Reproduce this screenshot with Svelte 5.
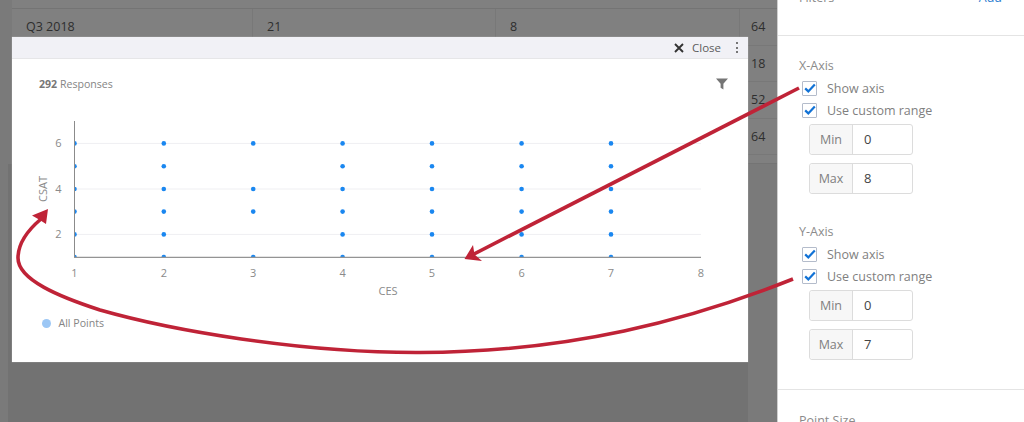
<script>
	const xTicks = [74.5, 163.8, 253.2, 342.6, 432, 521.6, 611, 701];
	const yPos = { 1: 257, 2: 234.4, 3: 211.6, 4: 189, 5: 166.2, 6: 143.4 };

	// which y values have points, per x value
	const series = [
		[1, 2, 3, 4, 5, 6],
		[1, 2, 3, 4, 5, 6],
		[1, 3, 4, 6],
		[1, 2, 3, 4, 5, 6],
		[1, 2, 3, 4, 5, 6],
		[1, 2, 3, 4, 5, 6],
		[1, 2, 3, 4, 5, 6]
	];

	const points = series.flatMap((ys, i) => ys.map((y) => ({ cx: xTicks[i], cy: yPos[y] })));

	const rows = [
		{ label: 'Q3 2018', a: '21', b: '8', c: '64' },
		{ label: '', a: '', b: '', c: '18' },
		{ label: '', a: '', b: '', c: '52' },
		{ label: '', a: '', b: '', c: '64' }
	];

	const axes = [
		{ title: 'X-Axis', min: 0, max: 8 },
		{ title: 'Y-Axis', min: 0, max: 7 }
	];
</script>

<div class="page">
	<main class="main">
		<div class="table">
			<div class="head-row"></div>
			{#each rows as row}
				<div class="row">
					<div class="cell">{row.label}</div>
					<div class="cell">{row.a}</div>
					<div class="cell">{row.b}</div>
					<div class="cell last">{row.c}</div>
				</div>
			{/each}
			<div class="tail-row"></div>
		</div>
		<div class="under"></div>
	</main>

	<aside class="sidebar">
		<section class="filters">
			<span>Filters</span>
			<span class="add">Add</span>
		</section>

		<section class="axes">
			{#each axes as axis}
				<div class="axis">
					<div class="title">{axis.title}</div>
					<label class="check">
						<span class="box">
							<svg width="12" height="10" viewBox="0 0 12 10"><path d="M1.2 5.4 4.3 8.4 10.8 1.4" fill="none" stroke="#1172d6" stroke-width="2.2" /></svg>
						</span>
						Show axis
					</label>
					<label class="check">
						<span class="box">
							<svg width="12" height="10" viewBox="0 0 12 10"><path d="M1.2 5.4 4.3 8.4 10.8 1.4" fill="none" stroke="#1172d6" stroke-width="2.2" /></svg>
						</span>
						Use custom range
					</label>
					<div class="field first"><span class="addon">Min</span><span class="value">{axis.min}</span></div>
					<div class="field"><span class="addon">Max</span><span class="value">{axis.max}</span></div>
				</div>
			{/each}
		</section>

		<section class="point-size">Point Size</section>
	</aside>

	<div class="modal">
		<header class="modal-head">
			<svg class="x-icon" width="10" height="10" viewBox="0 0 10 10"><path d="M1 1 9 9M9 1 1 9" stroke="#333" stroke-width="1.9" /></svg>
			<span class="close">Close</span>
			<span class="dots"><i></i><i></i><i></i></span>
		</header>
		<div class="summary">
			<span><b>292</b> Responses</span>
			<svg width="12" height="12" viewBox="0 0 12 12"><path d="M0 .5H12L7.4 5.8V11.6L4.6 9.8V5.8Z" fill="#757575" /></svg>
		</div>

		<svg class="chart" width="736" height="185" viewBox="12 115 736 185">
			<defs>
				<clipPath id="plot"><rect x="74.5" y="121" width="627" height="136" /></clipPath>
			</defs>
			{#each [2, 4, 6] as v}
				<line x1="74" x2="701" y1={yPos[v]} y2={yPos[v]} stroke="#efeff2" stroke-width="1" />
				<text class="tick" x="58.5" y={yPos[v] + 4} text-anchor="middle">{v}</text>
			{/each}
			<g clip-path="url(#plot)">
				{#each points as p}
					<circle cx={p.cx} cy={p.cy} r="2.3" fill="#1a87f0" />
				{/each}
			</g>
			<line x1="74.5" x2="74.5" y1="121" y2="257.5" stroke="#8b8b8b" stroke-width="1" />
			<line x1="74" x2="701" y1="257.3" y2="257.3" stroke="#949494" stroke-width="1.2" />
			{#each xTicks as x, i}
				<text class="tick" {x} y="277" text-anchor="middle">{i + 1}</text>
			{/each}
			<text class="tick" x="388" y="295" text-anchor="middle">CES</text>
			<text class="tick" transform="translate(47 189) rotate(-90)" text-anchor="middle">CSAT</text>
		</svg>

		<div class="legend"><span class="swatch"></span>All Points</div>
	</div>

	<svg class="arrows" width="1024" height="422" viewBox="0 0 1024 422">
		<g fill="none" stroke="#bf2337" stroke-width="3.6">
			<path d="M799 88 472 255" />
			<path d="M793 279C690 320 570 352 420 352.5 300 353 170 330 100 310 60 297 18 280 18 258 18 243 28 230 41 219" />
		</g>
		<g fill="#bf2337">
			<path d="M464.5 259 473 245 474.5 254.5 482 261Z" />
			<path d="M48 209 32 215.5 39 219.5 46 224Z" />
		</g>
	</svg>
</div>

<style>
	:global(body) {
		margin: 0;
	}

	.page {
		position: relative;
		display: grid;
		grid-template-columns: 777px 247px;
		width: 1024px;
		height: 422px;
		overflow: hidden;
		font-family: 'Open Sans', sans-serif;
	}

	.main {
		display: flex;
		flex-direction: column;
		background: #7a7a7a;
	}

	.table {
		margin-left: 12px;
		background: #808080;
		color: #2e2e2e;
		font-size: 12.5px;
	}

	.head-row {
		height: 8px;
		border-bottom: 1px solid #747474;
	}

	.row {
		display: grid;
		grid-template-columns: 241px 243px 244px 37px;
		height: 36.5px;
		box-sizing: border-box;
		border-bottom: 1px solid #787878;
	}

	.cell {
		padding-left: 14px;
		line-height: 36px;
		border-right: 1px solid #787878;
	}

	.cell.last {
		padding-left: 11px;
		border-right: 0;
	}

	.tail-row {
		height: 8px;
		border-bottom: 1px solid #747474;
	}

	.under {
		flex: 1;
		margin: 0 29px 0 8px;
		background: #727272;
	}

	.sidebar {
		background: #fff;
		border-left: 1px solid #cfcfcf;
		color: #8b8b8b;
		font-size: 12.5px;
	}

	.filters {
		display: flex;
		justify-content: space-between;
		height: 35px;
		padding: 0 22px 0 21px;
		line-height: 18px;
		border-bottom: 1px solid #e4e4e4;
		overflow: hidden;
	}

	.filters span {
		margin-top: -11px;
	}

	.add {
		color: #2f7fd1;
	}

	.axes {
		padding: 19px 0 29px 21px;
		border-bottom: 1px solid #e4e4e4;
	}

	.axis + .axis {
		margin-top: 27px;
	}

	.title {
		line-height: 22px;
	}

	.check {
		display: flex;
		align-items: center;
		gap: 10px;
		height: 22px;
		margin-left: 3px;
		color: #7f7f7f;
	}

	.box {
		display: flex;
		align-items: center;
		justify-content: center;
		box-sizing: border-box;
		width: 15px;
		height: 15px;
		border: 1.5px solid #b4bccb;
		border-radius: 1px;
	}

	.field {
		display: flex;
		box-sizing: border-box;
		width: 104px;
		height: 31px;
		margin: 8px 0 0 10px;
		border: 1px solid #dcdcdc;
		border-radius: 3px;
		line-height: 29px;
	}

	.field.first {
		margin-top: 3px;
	}

	.addon {
		width: 42px;
		text-align: center;
		color: #808080;
		background: #f7f7f7;
		border-right: 1px solid #dcdcdc;
		border-radius: 3px 0 0 3px;
	}

	.value {
		padding-left: 11px;
		color: #444;
		font-size: 13px;
	}

	.point-size {
		padding: 20px 0 0 21px;
		line-height: 22px;
	}

	.modal {
		position: absolute;
		top: 37px;
		left: 12px;
		box-sizing: border-box;
		width: 736px;
		height: 324.5px;
		background: #fff;
		box-shadow: 0 0 1px #c4c4c4;
	}

	.modal-head {
		display: flex;
		align-items: center;
		justify-content: flex-end;
		height: 21px;
		background: #f1f1f6;
		border-bottom: 1px solid #e6e6e8;
		font-size: 11.5px;
		color: #5c5c5c;
	}

	.x-icon {
		margin-right: 8px;
	}

	.close {
		margin-right: 15px;
	}

	.dots {
		display: flex;
		flex-direction: column;
		gap: 2.5px;
		margin-right: 10px;
	}

	.dots i {
		width: 2px;
		height: 2px;
		background: #4c4c4c;
		border-radius: 50%;
	}

	.summary {
		display: flex;
		align-items: center;
		justify-content: space-between;
		height: 16px;
		margin-top: 17px;
		padding: 0 20px 0 27px;
		color: #858585;
		font-size: 10.6px;
	}

	.summary b {
		font-weight: 700;
		color: #777;
	}

	.chart {
		display: block;
		margin-top: 23px;
	}

	.tick {
		fill: #8a8a8a;
		font-size: 11px;
	}

	.legend {
		display: flex;
		align-items: center;
		gap: 7.5px;
		height: 16px;
		margin-top: 15px;
		padding-left: 30px;
		color: #858585;
		font-size: 10.6px;
	}

	.swatch {
		width: 9px;
		height: 9px;
		background: #9cc7f5;
		border-radius: 50%;
	}

	.arrows {
		position: absolute;
		top: 0;
		left: 0;
		pointer-events: none;
	}
</style>
